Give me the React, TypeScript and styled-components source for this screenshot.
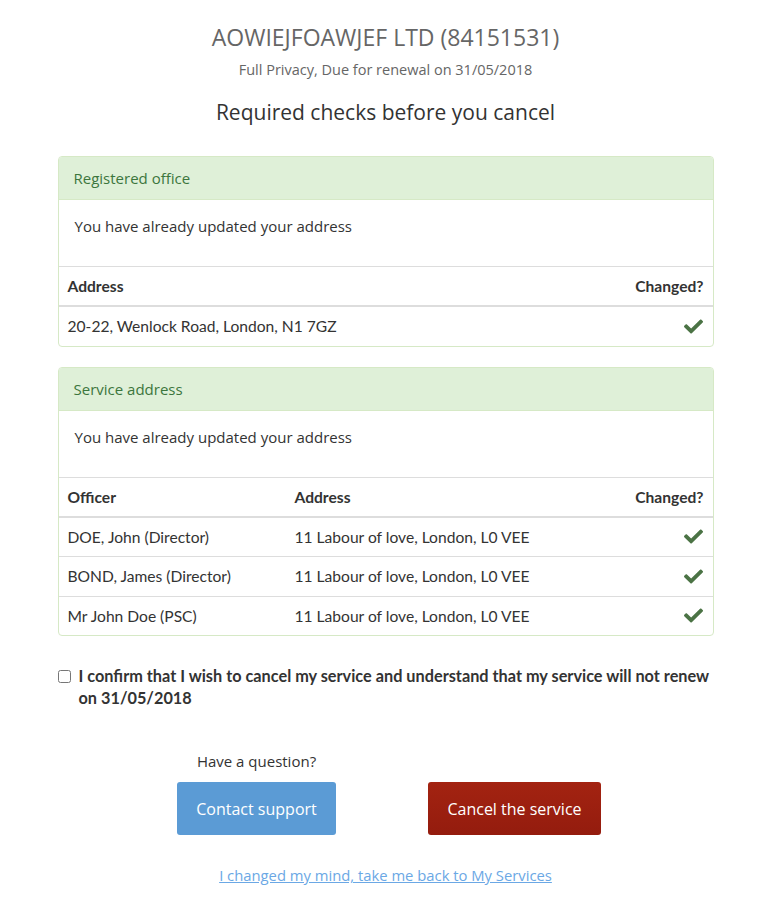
import React from "react";
import styled, { createGlobalStyle } from "styled-components";
import { FaCheck } from "react-icons/fa";

const GlobalStyle = createGlobalStyle`
  html, body {
    margin: 0;
    padding: 0;
    background: #ffffff;
  }
  body {
    font-family: "Open Sans", "Noto Sans", Arial, sans-serif;
    color: #333333;
  }
`;

const Page = styled.div`
  padding: 0 4px 0 0;
`;

const Container = styled.div`
  width: 656px;
  margin: 0 auto;
  padding: 22px 0 20px;
`;

const Title = styled.h1`
  margin: 0;
  text-align: center;
  font-size: 23px;
  line-height: 30px;
  font-weight: 400;
  color: #666666;
`;

const Subtitle = styled.p`
  margin: 8px 0 0;
  text-align: center;
  font-size: 14.5px;
  line-height: 20px;
  color: #666666;
`;

const Heading = styled.h2`
  margin: 17px 0 29px;
  text-align: center;
  font-size: 21px;
  line-height: 30px;
  font-weight: 400;
  color: #333333;
`;

const Panel = styled.section`
  border: 1px solid #d6e9c6;
  border-radius: 4px;
  margin-bottom: 20px;
  overflow: hidden;
  background: #ffffff;
`;

const PanelHeader = styled.div`
  background: #dff0d8;
  border-bottom: 1px solid #d6e9c6;
  color: #3c763d;
  padding: 11px 15px;
  font-size: 15px;
  line-height: 20px;
`;

const PanelBody = styled.div`
  padding: 16px 16px 15px;
  font-size: 15px;
  line-height: 20px;
  color: #333333;

  p {
    margin: 0 0 15px;
  }
`;

const Table = styled.table`
  width: 100%;
  border-collapse: collapse;
  font-family: Lato, "Open Sans", sans-serif;
  font-size: 15.6px;
  color: #333333;
`;

const Th = styled.th<{ $right?: boolean; $width?: string }>`
  text-align: ${(p) => (p.$right ? "right" : "left")};
  width: ${(p) => p.$width || "auto"};
  font-weight: 700;
  padding: 9px 9px;
  line-height: 20px;
  border-top: 1px solid #dddddd;
  border-bottom: 2px solid #dddddd;
`;

const Td = styled.td<{ $right?: boolean }>`
  text-align: ${(p) => (p.$right ? "right" : "left")};
  padding: 9px 9px 9.5px;
  line-height: 20px;
  height: 20px;
  border-top: 1px solid #dddddd;
  vertical-align: middle;
`;

const Tick = styled(FaCheck)`
  color: #4b7345;
  font-size: 19px;
  display: block;
  margin-left: auto;
  margin-right: 1px;
`;

const Confirm = styled.label`
  display: flex;
  align-items: flex-start;
  gap: 8px;
  margin-top: 29px;
  font-family: Lato, "Open Sans", sans-serif;
  font-weight: 700;
  font-size: 16.3px;
  line-height: 22px;
  color: #333333;

  input {
    margin: 5px 0 0;
    width: 13px;
    height: 13px;
    flex: none;
  }
`;

const Actions = styled.div`
  width: 516px;
  margin: 42px auto 0;
  display: grid;
  grid-template-columns: 1fr 1fr;
  align-items: end;
`;

const ActionCol = styled.div`
  display: flex;
  flex-direction: column;
  align-items: center;
`;

const Question = styled.div`
  font-size: 15px;
  line-height: 20px;
  margin-bottom: 11px;
  color: #333333;
`;

const Button = styled.button<{ $tone: "blue" | "red" }>`
  height: 53px;
  padding: 0 19px;
  border: none;
  border-radius: 3px;
  font-family: "Open Sans", sans-serif;
  font-size: 16px;
  color: #ffffff;
  cursor: pointer;
  background: ${(p) =>
    p.$tone === "blue"
      ? "#5b9bd5"
      : "linear-gradient(#a32311, #941c0e)"};
`;

const BackLink = styled.a`
  display: block;
  text-align: center;
  margin-top: 29px;
  font-size: 14.8px;
  line-height: 22px;
  color: #6ba8e5;
  text-decoration: underline;
`;

const officers = [
  { name: "DOE, John (Director)", address: "11 Labour of love, London, L0 VEE" },
  { name: "BOND, James (Director)", address: "11 Labour of love, London, L0 VEE" },
  { name: "Mr John Doe (PSC)", address: "11 Labour of love, London, L0 VEE" },
];

export default function App() {
  return (
    <Page>
      <GlobalStyle />
      <Container>
        <Title>AOWIEJFOAWJEF LTD (84151531)</Title>
        <Subtitle>Full Privacy, Due for renewal on 31/05/2018</Subtitle>
        <Heading>Required checks before you cancel</Heading>

        <Panel>
          <PanelHeader>Registered office</PanelHeader>
          <PanelBody>
            <p>You have already updated your address</p>
          </PanelBody>
          <Table>
            <thead>
              <tr>
                <Th>Address</Th>
                <Th $right>Changed?</Th>
              </tr>
            </thead>
            <tbody>
              <tr>
                <Td>20-22, Wenlock Road, London, N1 7GZ</Td>
                <Td $right>
                  <Tick />
                </Td>
              </tr>
            </tbody>
          </Table>
        </Panel>

        <Panel>
          <PanelHeader>Service address</PanelHeader>
          <PanelBody>
            <p>You have already updated your address</p>
          </PanelBody>
          <Table>
            <thead>
              <tr>
                <Th $width="209px">Officer</Th>
                <Th>Address</Th>
                <Th $right>Changed?</Th>
              </tr>
            </thead>
            <tbody>
              {officers.map((o) => (
                <tr key={o.name}>
                  <Td>{o.name}</Td>
                  <Td>{o.address}</Td>
                  <Td $right>
                    <Tick />
                  </Td>
                </tr>
              ))}
            </tbody>
          </Table>
        </Panel>

        <Confirm>
          <input type="checkbox" />
          <span>
            I confirm that I wish to cancel my service and understand that my
            service will not renew on 31/05/2018
          </span>
        </Confirm>

        <Actions>
          <ActionCol>
            <Question>Have a question?</Question>
            <Button $tone="blue">Contact support</Button>
          </ActionCol>
          <ActionCol>
            <Button $tone="red">Cancel the service</Button>
          </ActionCol>
        </Actions>

        <BackLink href="#">I changed my mind, take me back to My Services</BackLink>
      </Container>
    </Page>
  );
}
